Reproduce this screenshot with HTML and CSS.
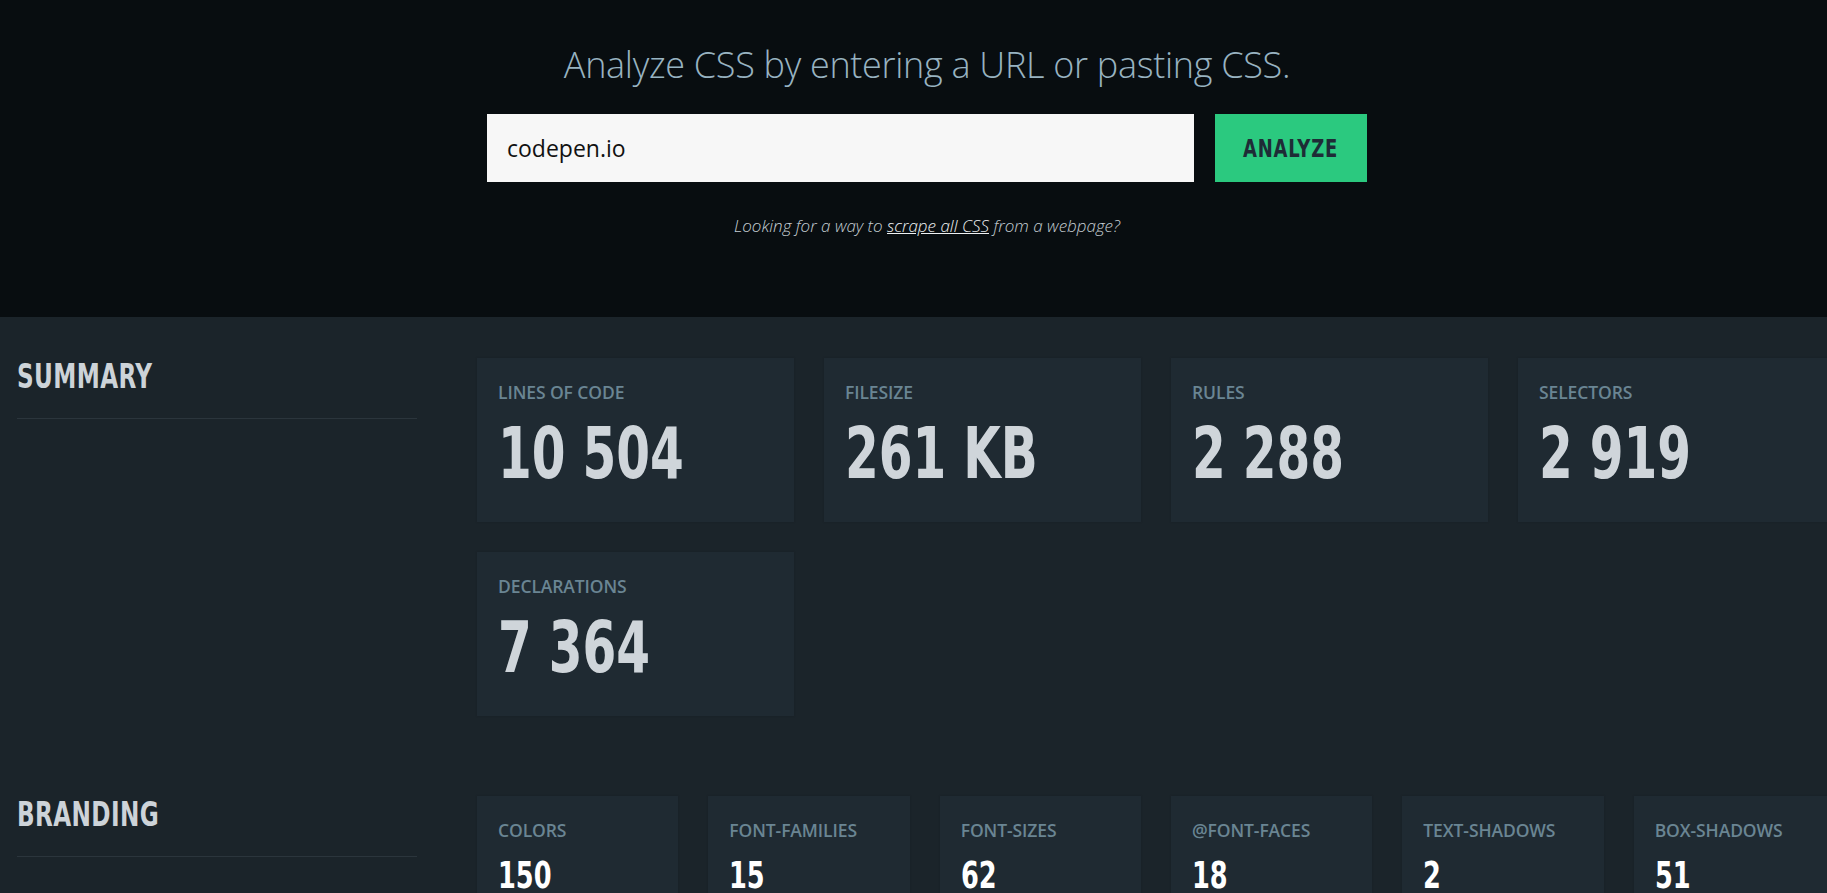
FILE: index.html
```html
<!DOCTYPE html>
<html lang="en">
<head>
<meta charset="utf-8">
<title>Analyze CSS</title>
<link rel="stylesheet" href="styles.css">
</head>
<body>
<header class="hero">
  <h1 class="hero-title">Analyze CSS by entering a URL or pasting CSS.</h1>
  <form class="hero-form">
    <input class="hero-input" type="text" value="codepen.io">
    <button class="hero-button" type="button"><span class="narrow">ANALYZE</span></button>
  </form>
  <p class="hero-note">Looking for a way to <a href="#" class="hero-link">scrape all CSS</a> from a webpage?</p>
</header>
<main class="report">
  <section class="report-section">
    <div class="section-side">
      <h2 class="section-title"><span class="narrow">SUMMARY</span></h2>
    </div>
    <div class="stat-grid stat-grid-4">
      <div class="stat-card"><div class="stat-label">LINES OF CODE</div><div class="stat-value">10 504</div></div>
      <div class="stat-card"><div class="stat-label">FILESIZE</div><div class="stat-value">261 KB</div></div>
      <div class="stat-card"><div class="stat-label">RULES</div><div class="stat-value">2 288</div></div>
      <div class="stat-card"><div class="stat-label">SELECTORS</div><div class="stat-value">2 919</div></div>
      <div class="stat-card"><div class="stat-label">DECLARATIONS</div><div class="stat-value">7 364</div></div>
    </div>
  </section>
  <section class="report-section">
    <div class="section-side">
      <h2 class="section-title"><span class="narrow">BRANDING</span></h2>
    </div>
    <div class="stat-grid stat-grid-6">
      <div class="stat-card"><div class="stat-label">COLORS</div><div class="stat-value stat-value-sm">150</div></div>
      <div class="stat-card"><div class="stat-label">FONT-FAMILIES</div><div class="stat-value stat-value-sm">15</div></div>
      <div class="stat-card"><div class="stat-label">FONT-SIZES</div><div class="stat-value stat-value-sm">62</div></div>
      <div class="stat-card"><div class="stat-label">@FONT-FACES</div><div class="stat-value stat-value-sm">18</div></div>
      <div class="stat-card"><div class="stat-label">TEXT-SHADOWS</div><div class="stat-value stat-value-sm">2</div></div>
      <div class="stat-card"><div class="stat-label">BOX-SHADOWS</div><div class="stat-value stat-value-sm">51</div></div>
    </div>
  </section>
</main>
</body>
</html>
```
FILE: styles.css
```css
html, body {
  margin: 0;
  padding: 0;
}
body {
  background: #1b242a;
  font-family: "Open Sans", "Noto Sans", sans-serif;
  overflow: hidden;
  width: 1827px;
  height: 893px;
}
.narrow {
  display: inline-block;
  transform: scaleX(0.78);
  transform-origin: left center;
  white-space: nowrap;
}
.hero {
  background: #080d10;
  height: 317px;
  box-sizing: border-box;
  padding: 43px 0 0 27px;
  text-align: center;
}
.hero-title {
  margin: 0;
  font-family: "Open Sans", sans-serif;
  font-weight: 300;
  font-size: 36px;
  line-height: 44px;
  color: #98b3c1;
  letter-spacing: -0.3px;
}
.hero-form {
  display: flex;
  justify-content: center;
  gap: 21px;
  margin-top: 27px;
}
.hero-input {
  width: 707px;
  height: 68px;
  box-sizing: border-box;
  border: 0;
  margin: 0;
  padding: 0 0 0 20px;
  background: #f7f7f7;
  font-family: "Open Sans", sans-serif;
  font-size: 23px;
  color: #111;
  outline: none;
}
.hero-button {
  width: 152px;
  height: 68px;
  border: 0;
  margin: 0;
  padding: 0;
  background: #2bc97f;
  color: #1e2c36;
  font-family: "DejaVu Sans Condensed", sans-serif;
  font-weight: 700;
  font-size: 25px;
  letter-spacing: 1px;
}
.hero-button .narrow {
  transform: scaleX(0.8);
  transform-origin: center center;
}
.hero-note {
  margin: 33px 0 0;
  font-style: italic;
  font-weight: 300;
  font-size: 17px;
  line-height: 22px;
  color: #c5ced3;
}
.hero-link {
  color: #eef1f3;
  text-decoration: underline;
}
.report-section {
  display: flex;
  gap: 60px;
  padding: 41px 0 39px 17px;
}
.section-side {
  flex: 0 0 400px;
}
.section-title {
  margin: 2px 0 0;
  padding-bottom: 25px;
  border-bottom: 1px solid #2b353c;
  font-family: "DejaVu Sans Condensed", sans-serif;
  font-weight: 700;
  font-size: 33px;
  line-height: 33px;
  color: #cdd3d8;
  letter-spacing: 0.5px;
}
.stat-grid {
  display: grid;
  gap: 30px;
  width: 1358px;
  flex: 0 0 1358px;
  align-content: start;
}
.stat-grid-4 {
  grid-template-columns: repeat(4, 1fr);
}
.stat-grid-6 {
  grid-template-columns: repeat(6, 1fr);
}
.stat-card {
  background: #1f2a32;
  padding: 24px 21px 33px;
  box-shadow: 0 0 2px rgba(0, 0, 0, 0.15);
}
.stat-label {
  font-family: "Open Sans", sans-serif;
  font-weight: 600;
  font-size: 17.5px;
  line-height: 20px;
  letter-spacing: -0.1px;
  color: #6a8593;
}
.stat-value {
  margin-top: 16px;
  font-family: "DejaVu Sans Condensed", sans-serif;
  font-weight: 700;
  font-size: 71px;
  line-height: 71px;
  color: #cfd5da;
  transform: scaleX(0.76);
  transform-origin: left center;
  white-space: nowrap;
}
.stat-value-sm {
  margin-top: 16px;
  font-size: 38px;
  line-height: 38px;
  color: #ffffff;
  transform: scaleX(0.75);
}
```
